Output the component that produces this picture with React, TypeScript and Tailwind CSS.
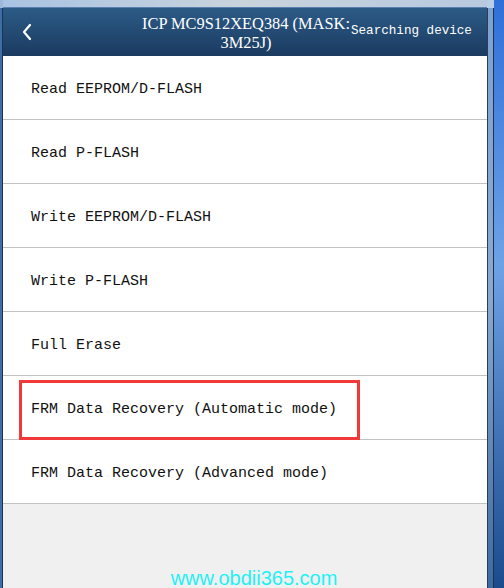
import React from "react";

const items = [
  "Read EEPROM/D-FLASH",
  "Read P-FLASH",
  "Write EEPROM/D-FLASH",
  "Write P-FLASH",
  "Full Erase",
  "FRM Data Recovery (Automatic mode)",
  "FRM Data Recovery (Advanced mode)",
];

const mono = { fontFamily: '"Liberation Mono", "DejaVu Sans Mono", monospace' };

export default function App() {
  return (
    <div className="flex h-[588px] w-[504px] overflow-hidden bg-[#f0f0f0]">
      {/* left window frame */}
      <div className="flex w-[3px] flex-col">
        <div className="h-[8px] bg-[#9cb9dc]" />
        <div className="flex flex-1">
          <div className="w-[2px] bg-[#3c6ea8]" />
          <div className="w-[1px] bg-[#1e3350]" />
        </div>
      </div>

      <div className="flex w-[484px] flex-col">
        <div className="h-[8px] bg-gradient-to-r from-[#a9c3e3] via-[#c9d3dc] to-[#b7c9e0] border-b border-[#5a7fae]" />

        {/* header */}
        <div className="relative flex h-[48px] items-center bg-gradient-to-b from-[#2c5b87] to-[#1b3b60] text-white">
          <svg className="absolute left-[18px] top-[15px]" width="12" height="18" viewBox="0 0 12 18">
            <path d="M9 2 L3 9 L9 16" fill="none" stroke="#fff" strokeWidth="2.2" strokeLinecap="round" strokeLinejoin="round" />
          </svg>
          <div
            className="absolute left-[136px] top-[6px] w-[214px] text-center text-[16.4px] leading-[19px]"
            style={{ fontFamily: '"Liberation Serif", "Times New Roman", serif' }}
          >
            ICP MC9S12XEQ384 (MASK:
            <br />
            3M25J)
          </div>
          <div className="absolute left-[348px] top-[15px] text-[12.6px] leading-[16px]" style={mono}>
            Searching device
          </div>
        </div>

        {/* menu list */}
        <div className="flex flex-col bg-white">
          {items.map((label, i) => (
            <div
              key={label}
              className="relative flex h-[64px] items-center border-b border-[#c3c3c3] pl-[28px] pt-[5px] text-[15px] text-[#111]"
              style={mono}
            >
              {i === 5 && (
                <div className="absolute left-[16px] top-[4px] h-[60px] w-[341px] border-[3px] border-[#f03a3a]" />
              )}
              <span>{label}</span>
            </div>
          ))}
        </div>

        <div className="flex flex-1 items-end justify-center bg-[#f0f0f0] pl-[18px]">
          <span
            className="text-[20px] leading-[20px] text-[#1ff0f5]"
            style={{ fontFamily: '"Liberation Sans", Arial, sans-serif' }}
          >
            www.obdii365.com
          </span>
        </div>
      </div>

      {/* right window frame */}
      <div className="flex w-[7px] flex-col">
        <div className="h-[8px] bg-[#b8cde6]" />
        <div className="flex flex-1">
          <div className="w-[1px] bg-[#2a3e58]" />
          <div className="w-[5px] bg-gradient-to-b from-[#7da2d2] via-[#8aa9cf] to-[#3d6aa0]" />
          <div className="w-[1px] bg-[#1d3150]" />
        </div>
      </div>

      {/* desktop background */}
      <div className="w-[10px] bg-gradient-to-b from-[#2f6fd8] via-[#6ea2e6] via-[45%] to-[#1c4b8c]" />
    </div>
  );
}
